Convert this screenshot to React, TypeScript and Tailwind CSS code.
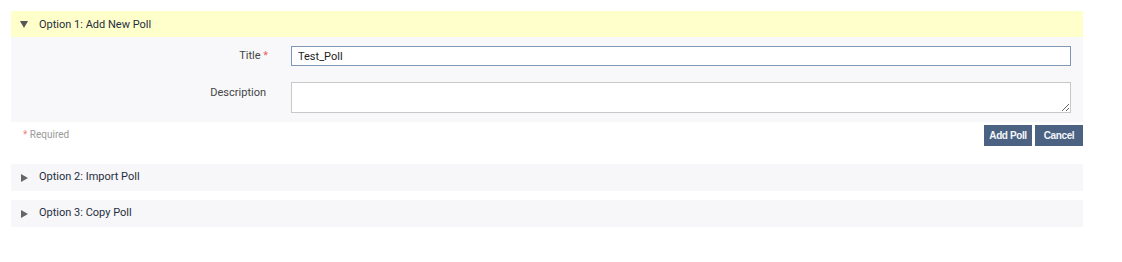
function Caret({ open }: { open?: boolean }) {
  return (
    <svg
      width="8"
      height="8"
      viewBox="0 0 8 8"
      className={open ? 'fill-[#555]' : 'fill-[#666]'}
    >
      {open ? <polygon points="0,0 8,0 4,7" /> : <polygon points="1,0 8,4 1,8" />}
    </svg>
  );
}

function SectionHeader({
  label,
  open,
}: {
  label: string;
  open?: boolean;
}) {
  return (
    <div
      className={`flex items-center gap-[11px] pl-[9px] ${open ? 'h-[26px] bg-[#ffffcc] pt-[2px]' : 'h-[27px] bg-[#f7f7f9]'}`}
    >
      <Caret open={open} />
      <span className="text-[11px] text-[#1f2d3d]">{label}</span>
    </div>
  );
}

export default function App() {
  return (
    <div className="h-[262px] w-[1122px] bg-white pt-[11px] pl-[11px] font-['Roboto',sans-serif]">
      <div className="w-[1072px]">
        <SectionHeader label="Option 1: Add New Poll" open />
        <div className="flex flex-col gap-[16px] bg-[#f8f8fa] pt-[9px] pr-[12px] pb-[9px]">
          <div className="flex items-center">
            <label className="w-[257px] text-right text-[11px] text-[#444]">
              Title <span className="text-[#f06060]">*</span>
            </label>
            <input
              defaultValue="Test_Poll"
              className="ml-[23px] h-[20px] flex-1 border border-[#7f99b5] bg-white px-[6px] text-[11px] text-[#222] outline-none"
            />
          </div>
          <div className="flex items-start">
            <label className="w-[257px] pt-[3px] pr-[2px] text-right text-[11px] text-[#444]">
              Description
            </label>
            <textarea className="ml-[23px] h-[31px] flex-1 border border-[#c8c8c8] bg-white text-[11px] outline-none" />
          </div>
        </div>
        <div className="flex items-start justify-between pt-[3px]">
          <span className="pt-[2px] pl-[12px] text-[10px] text-[#999]">
            <span className="text-[#f08080]">*</span> Required
          </span>
          <div className="flex gap-[3px]">
            <button
              type="button"
              className="h-[21px] w-[48px] bg-[#4b6283] font-['Liberation_Sans',sans-serif] text-[10px] font-bold tracking-[-0.4px] text-[#f4f7fb]"
            >
              Add Poll
            </button>
            <button
              type="button"
              className="h-[21px] w-[48px] bg-[#4b6283] font-['Liberation_Sans',sans-serif] text-[10px] font-bold tracking-[-0.4px] text-[#f4f7fb]"
            >
              Cancel
            </button>
          </div>
        </div>
        <div className="mt-[18px] flex flex-col gap-[9px]">
          <SectionHeader label="Option 2: Import Poll" />
          <SectionHeader label="Option 3: Copy Poll" />
        </div>
      </div>
    </div>
  );
}
